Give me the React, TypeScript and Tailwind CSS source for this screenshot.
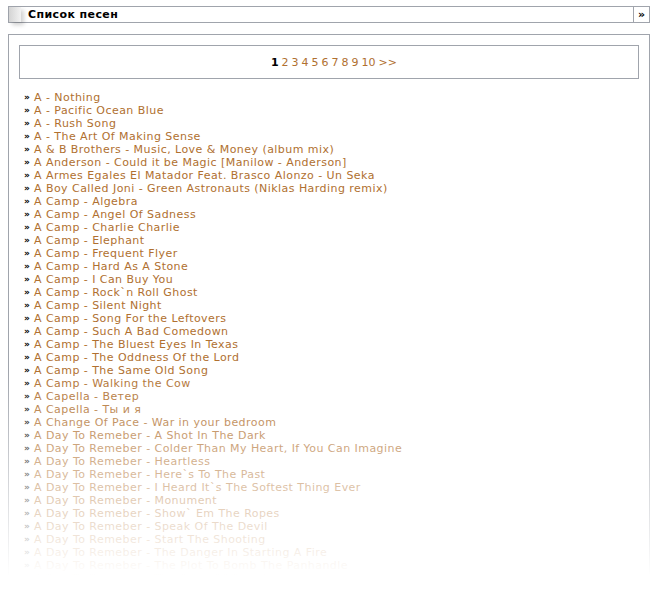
const SONGS = [
  "A - Nothing",
  "A - Pacific Ocean Blue",
  "A - Rush Song",
  "A - The Art Of Making Sense",
  "A & B Brothers - Music, Love & Money (album mix)",
  "A Anderson - Could it be Magic [Manilow - Anderson]",
  "A Armes Egales El Matador Feat. Brasco Alonzo - Un Seka",
  "A Boy Called Joni - Green Astronauts (Niklas Harding remix)",
  "A Camp - Algebra",
  "A Camp - Angel Of Sadness",
  "A Camp - Charlie Charlie",
  "A Camp - Elephant",
  "A Camp - Frequent Flyer",
  "A Camp - Hard As A Stone",
  "A Camp - I Can Buy You",
  "A Camp - Rock`n Roll Ghost",
  "A Camp - Silent Night",
  "A Camp - Song For the Leftovers",
  "A Camp - Such A Bad Comedown",
  "A Camp - The Bluest Eyes In Texas",
  "A Camp - The Oddness Of the Lord",
  "A Camp - The Same Old Song",
  "A Camp - Walking the Cow",
  "A Capella - Ветер",
  "A Capella - Ты и я",
  "A Change Of Pace - War in your bedroom",
  "A Day To Remeber - A Shot In The Dark",
  "A Day To Remeber - Colder Than My Heart, If You Can Imagine",
  "A Day To Remeber - Heartless",
  "A Day To Remeber - Here`s To The Past",
  "A Day To Remeber - I Heard It`s The Softest Thing Ever",
  "A Day To Remeber - Monument",
  "A Day To Remeber - Show` Em The Ropes",
  "A Day To Remeber - Speak Of The Devil",
  "A Day To Remeber - Start The Shooting",
  "A Day To Remeber - The Danger In Starting A Fire",
  "A Day To Remeber - The Plot To Bomb The Panhandle",
  "A Day To Remeber - The Price Of Gasoline",
];

const PAGES = ["2", "3", "4", "5", "6", "7", "8", "9", "10"];

export default function App() {
  return (
    <div className="relative h-[611px] overflow-hidden bg-white font-['DejaVu_Sans',Verdana,sans-serif] text-[11px] leading-[13px]">
      {/* header bar */}
      <div className="mx-[8px] mt-[6px] flex h-[17px] border border-[#a0a4ac] bg-white">
        <div className="w-[12px] shrink-0 bg-[linear-gradient(to_right,#d4d4d4,#f2f2f2)] shadow-[3px_3px_4px_rgba(0,0,0,0.18)]" />
        <div className="flex-1 pl-[7px] font-bold leading-[15px] tracking-[0.4px] text-black">Список песен</div>
        <div className="flex w-[16px] shrink-0 items-center justify-center border-l border-[#a0a4ac] text-[11px] font-bold leading-[15px] text-black">
          »
        </div>
      </div>

      {/* content box */}
      <div className="mx-[8px] mt-[11px] border border-[#a0a4ac] px-[10px] pt-[10px] pb-[20px]">
        <div className="flex h-[34px] items-center justify-center gap-[3px] border border-[#a0a4ac] pl-[10px]">
          <span className="font-bold text-black">1</span>
          {PAGES.map((p) => (
            <span key={p} className="text-[#b07030]">
              {p}
            </span>
          ))}
          <span className="text-[#b07030]">&gt;&gt;</span>
        </div>

        <ul className="mt-[12px] pl-[5px]">
          {SONGS.map((s) => (
            <li key={s} className="flex h-[13px] items-center whitespace-nowrap">
              <span className="w-[10px] shrink-0 text-[9px] font-bold text-black">»</span>
              <span className="tracking-[0.45px] text-[#b07030]">{s}</span>
            </li>
          ))}
        </ul>
      </div>

      {/* fade-out overlay */}
      <div className="pointer-events-none absolute inset-x-0 top-[370px] bottom-0 bg-[linear-gradient(to_bottom,rgba(255,255,255,0)_0px,#ffffff_205px)]" />
    </div>
  );
}
